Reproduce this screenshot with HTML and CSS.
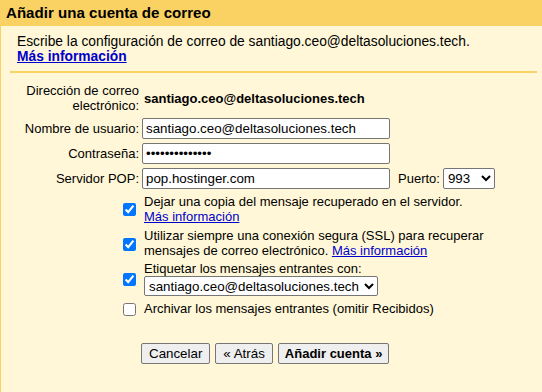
FILE: index.html
```html
<!DOCTYPE html>
<html lang="es">
<head>
<meta charset="utf-8">
<title>Añadir una cuenta de correo</title>
<link rel="stylesheet" href="styles.css">
</head>
<body>
<div class="header">Añadir una cuenta de correo</div>
<div class="content">
  <div class="intro">
    Escribe la configuración de correo de santiago.ceo@deltasoluciones.tech.<br>
    <a href="#" class="link bold">Más información</a>
  </div>
  <div class="rule"></div>
  <div class="form">
    <div class="label two">Dirección de correo electrónico:</div>
    <div class="value bold pad">santiago.ceo@deltasoluciones.tech</div>

    <div class="label">Nombre de usuario:</div>
    <div class="value"><input class="text" type="text" value="santiago.ceo@deltasoluciones.tech"></div>

    <div class="label">Contraseña:</div>
    <div class="value"><input class="text" type="password" value="abcdefghijklmn"></div>

    <div class="label">Servidor POP:</div>
    <div class="value row">
      <input class="text" type="text" value="pop.hostinger.com">
      <span class="port-label">Puerto:</span>
      <select class="port"><option>993</option></select>
    </div>

    <div class="check"><input type="checkbox" checked></div>
    <div class="value pad first">Dejar una copia del mensaje recuperado en el servidor.<br><a href="#" class="link">Más información</a></div>

    <div class="check"><input type="checkbox" checked></div>
    <div class="value pad">Utilizar siempre una conexión segura (SSL) para recuperar<br>mensajes de correo electrónico. <a href="#" class="link">Más información</a></div>

    <div class="check tag"><input type="checkbox" checked></div>
    <div class="value pad tight">Etiquetar los mensajes entrantes con:<br><select class="labelsel"><option>santiago.ceo@deltasoluciones.tech</option></select></div>

    <div class="check"><input type="checkbox"></div>
    <div class="value pad last">Archivar los mensajes entrantes (omitir Recibidos)</div>
  </div>
  <div class="buttons">
    <button class="btn">Cancelar</button>
    <button class="btn">« Atrás</button>
    <button class="btn bold primary">Añadir cuenta »</button>
  </div>
</div>
</body>
</html>
```

FILE: styles.css
```css
html, body {
  margin: 0;
  padding: 0;
}
body {
  background: #fff7d7;
  font-family: "Liberation Sans", Arial, sans-serif;
  font-size: 13px;
  color: #000;
  height: 392px;
  border-left: 1px solid #fad163;
  box-sizing: border-box;
}
.header {
  background: #fad163;
  height: 26px;
  line-height: 25px;
  font-size: 15.1px;
  font-weight: bold;
  padding-left: 6px;
  margin-left: -1px;
}
.content {
  padding: 8px 5px 0 9px;
}
.intro {
  padding-left: 7px;
  font-size: 13.8px;
  line-height: 15px;
}
.bold { font-weight: bold; }
.link { color: #00c; text-decoration: underline; }
.rule {
  height: 2px;
  background: #fad163;
  margin-top: 7px;
}
.form {
  display: grid;
  grid-template-columns: 119px auto;
  column-gap: 3px;
  row-gap: 4px;
  margin-top: 9px;
  margin-left: 10px;
  align-items: center;
}
.label {
  text-align: right;
  line-height: 15px;
}
.value { line-height: 15px; }
.pad { padding-left: 2px; }
.label.two { padding-top: 1px; padding-bottom: 1px; }
.text {
  width: 248px;
  height: 21px;
  box-sizing: border-box;
  font-family: "Liberation Sans", Arial, sans-serif;
  font-size: 13.33px;
  border: 1px solid #767676;
  border-radius: 2px;
  padding: 1px 3px;
  margin: 0;
  background: #fff;
}
.row { display: flex; align-items: center; }
.port-label { margin-left: 8px; margin-right: 3px; }
select {
  font-family: "Liberation Sans", Arial, sans-serif;
  font-size: 13.33px;
  height: 21px;
  border: 1px solid #767676;
  border-radius: 2px;
  background: #fff;
  margin: 0;
  color: #000;
}
.port { width: 52px; }
.check {
  text-align: right;
  align-self: center;
}
.check input { margin: 0 3px 0 0; vertical-align: middle; width: 13px; height: 13px; }
.first { margin-top: 1px; }
.tight { margin-top: -1px; }
.check.tag { margin-top: -1px; }
.labelsel { margin-top: 0; height: 20px; width: 234px; }
.last { padding-top: 1px; }
.buttons {
  margin-top: 27px;
  padding-left: 131px;
  display: flex;
  gap: 5px;
}
.btn {
  font-family: "Liberation Sans", Arial, sans-serif;
  font-size: 13.33px;
  height: 21px;
  padding: 0 7px;
  border: 1px solid #767676;
  border-radius: 2px;
  background: #efefef;
  color: #000;
}
.btn.primary { font-size: 13px; padding: 0 6px; }
```
